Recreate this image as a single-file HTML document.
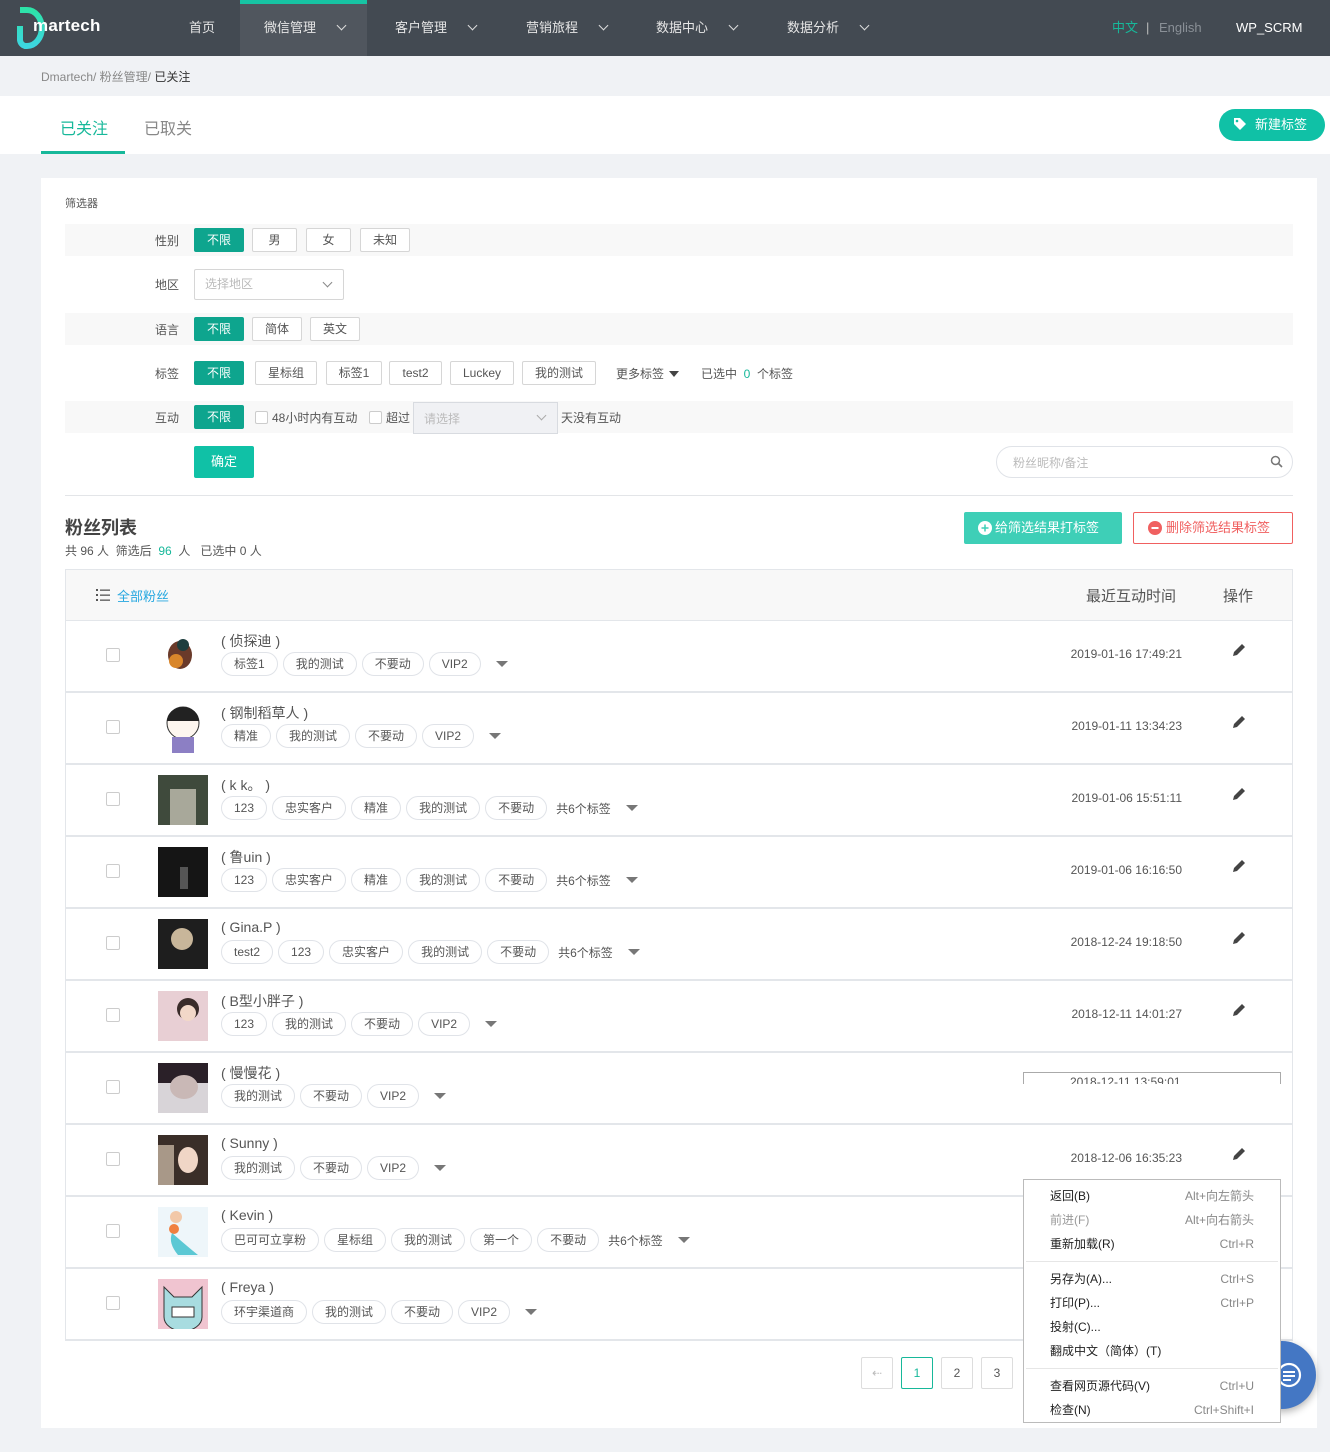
<!DOCTYPE html>
<html><head><meta charset="utf-8">
<style>
*{box-sizing:border-box;margin:0;padding:0}
body{width:1330px;height:1452px;background:#f0f2f5;font-family:"Liberation Sans","Noto Sans CJK SC",sans-serif;font-size:12px;color:#555;position:relative;overflow:hidden}
.abs{position:absolute}
.hdr{left:0;top:0;width:1330px;height:56px;background:#434a52}
.nav{top:0;height:56px;line-height:56px;color:#e6e6e6;font-size:13px}
.nav .v{display:inline-block;width:7px;height:7px;border-right:1.3px solid #ddd;border-bottom:1.3px solid #ddd;transform:rotate(45deg);margin-left:22px;position:relative;top:-3px}
.btn{position:absolute;height:24px;line-height:22px;border:1px solid #d6d6d6;border-radius:2px;background:#fff;text-align:center;font-size:12px;color:#555}
.btn.on{background:#0ea58e;border-color:#0ea58e;color:#fff}
.lbl{position:absolute;left:155px;font-size:12px;color:#555}
.band{position:absolute;left:65px;width:1228px;background:#f8f8f8}
.row{position:absolute;left:66px;width:1226px;height:72px;background:#fff;border-bottom:2px solid #e3e6ea}
.cb{position:absolute;left:40px;top:27px;width:14px;height:14px;border:1px solid #ccc;border-radius:2px;background:#fff}
.av{position:absolute;left:92px;top:10px;width:50px;height:50px}
.nm{position:absolute;left:155px;top:10px;font-size:14px;color:#555}
.tags{position:absolute;left:155px;top:31px;display:flex;gap:5px;align-items:center}
.tg{height:24px;line-height:22px;border:1px solid #e0e3e8;border-radius:12px;padding:0 12px;font-size:12px;color:#555;background:#fff}
.tri{width:0;height:0;border-left:6px solid transparent;border-right:6px solid transparent;border-top:6px solid #777;margin-left:10px}
.dt{position:absolute;right:110px;top:26px;font-size:12px;color:#555}
.pen{position:absolute;right:46px;top:22px}
.pg{position:absolute;top:1357px;width:32px;height:32px;border:1px solid #ddd;border-radius:2px;background:#fff;text-align:center;line-height:30px;font-size:12px;color:#555}
.cm{left:1023px;top:1179px;width:258px;height:244px;background:#fff;border:1px solid #bbb;font-size:12px;color:#222}
.cm div{position:absolute;left:26px;right:26px;height:20px;line-height:20px}
.cm span{float:right;color:#888}
.sep{position:absolute;left:2px!important;right:2px!important;height:1px!important;background:#e6e6e6}
</style></head><body>

<div class="abs hdr"></div>
<svg class="abs" style="left:15px;top:6px" width="30" height="44" viewBox="0 0 30 44"><defs><linearGradient id="g" x1="0" y1="0" x2="0" y2="1"><stop offset="0" stop-color="#2de3a8"/><stop offset="1" stop-color="#3dd6e0"/></linearGradient></defs><path d="M5 4 H12 A14 17 0 0 1 12 40 H10 A7 7 0 0 1 5 34 V20" fill="none" stroke="url(#g)" stroke-width="6"/></svg>
<div class="abs" style="left:33px;top:16px;color:#fff;font-size:17px;font-weight:bold;letter-spacing:0.2px">martech</div>
<div class="abs" style="left:240px;top:0;width:127px;height:56px;background:#50565e"></div>
<div class="abs" style="left:240px;top:0;width:127px;height:4px;background:#17c3a3"></div>
<div class="abs nav" style="left:189px">首页</div>
<div class="abs nav" style="left:264px">微信管理<i class="v"></i></div>
<div class="abs nav" style="left:395px">客户管理<i class="v"></i></div>
<div class="abs nav" style="left:526px">营销旅程<i class="v"></i></div>
<div class="abs nav" style="left:656px">数据中心<i class="v"></i></div>
<div class="abs nav" style="left:787px">数据分析<i class="v"></i></div>
<div class="abs nav" style="left:1112px;color:#17b89a">中文</div>
<div class="abs nav" style="left:1146px;color:#bbb">|</div>
<div class="abs nav" style="left:1159px;color:#8a9097">English</div>
<div class="abs nav" style="left:1236px;color:#fff">WP_SCRM</div>

<div class="abs" style="left:41px;top:68px;color:#888">Dmartech/ 粉丝管理/ <b style="color:#333;font-weight:normal">已关注</b></div>

<div class="abs" style="left:0;top:96px;width:1330px;height:58px;background:#fff"></div>
<div class="abs" style="left:60px;top:115px;font-size:16px;color:#17b89a">已关注</div>
<div class="abs" style="left:41px;top:151px;width:84px;height:3px;background:#17b89a"></div>
<div class="abs" style="left:144px;top:115px;font-size:16px;color:#888">已取关</div>
<div class="abs" style="left:1219px;top:109px;width:106px;height:32px;border-radius:16px;background:#10c1a6;color:#fff;font-size:13px;line-height:32px;padding-left:36px">新建标签</div>
<svg class="abs" style="left:1233px;top:117px" width="14" height="14" viewBox="0 0 14 14"><path d="M1 1h6l6 6-6 6-6-6z" fill="#fff"/><circle cx="4" cy="4" r="1.3" fill="#10c1a6"/></svg>

<div class="abs" style="left:41px;top:178px;width:1276px;height:1250px;background:#fff"></div>
<div class="abs" style="left:65px;top:195px;font-size:11px;color:#555">筛选器</div>

<div class="band" style="top:224px;height:32px"></div>
<div class="lbl" style="top:232px">性别</div>
<div class="btn on" style="left:194px;top:228px;width:50px">不限</div>
<div class="btn" style="left:252px;top:228px;width:45px">男</div>
<div class="btn" style="left:306px;top:228px;width:45px">女</div>
<div class="btn" style="left:360px;top:228px;width:50px">未知</div>

<div class="lbl" style="top:276px">地区</div>
<div class="btn" style="left:194px;top:269px;width:150px;height:31px;line-height:29px;text-align:left;padding-left:10px;color:#bbb">选择地区</div>
<div class="abs" style="left:324px;top:279px;width:7px;height:7px;border-right:1px solid #888;border-bottom:1px solid #888;transform:rotate(45deg)"></div>

<div class="band" style="top:313px;height:32px"></div>
<div class="lbl" style="top:321px">语言</div>
<div class="btn on" style="left:194px;top:317px;width:50px">不限</div>
<div class="btn" style="left:252px;top:317px;width:50px">简体</div>
<div class="btn" style="left:310px;top:317px;width:50px">英文</div>

<div class="lbl" style="top:365px">标签</div>
<div class="btn on" style="left:194px;top:361px;width:50px">不限</div>
<div class="btn" style="left:255px;top:361px;width:62px">星标组</div>
<div class="btn" style="left:326px;top:361px;width:56px">标签1</div>
<div class="btn" style="left:389px;top:361px;width:53px">test2</div>
<div class="btn" style="left:450px;top:361px;width:64px">Luckey</div>
<div class="btn" style="left:522px;top:361px;width:74px">我的测试</div>
<div class="abs" style="left:616px;top:365px">更多标签</div>
<div class="abs" style="left:669px;top:371px;border-left:5px solid transparent;border-right:5px solid transparent;border-top:6px solid #444"></div>
<div class="abs" style="left:701px;top:365px">已选中 <span style="color:#17b89a">&nbsp;0&nbsp;</span> 个标签</div>

<div class="band" style="top:401px;height:32px"></div>
<div class="lbl" style="top:409px">互动</div>
<div class="btn on" style="left:194px;top:405px;width:50px">不限</div>
<div class="abs" style="left:255px;top:411px;width:13px;height:13px;border:1px solid #ccc;border-radius:2px;background:#fff"></div>
<div class="abs" style="left:272px;top:409px">48小时内有互动</div>
<div class="abs" style="left:369px;top:411px;width:13px;height:13px;border:1px solid #ccc;border-radius:2px;background:#fff"></div>
<div class="abs" style="left:386px;top:409px">超过</div>
<div class="abs" style="left:413px;top:402px;width:145px;height:32px;background:#f0f1f4;border:1px solid #d8dbe0;color:#bbb;padding:7px 10px">请选择</div>
<div class="abs" style="left:538px;top:412px;width:7px;height:7px;border-right:1px solid #aaa;border-bottom:1px solid #aaa;transform:rotate(45deg)"></div>
<div class="abs" style="left:561px;top:409px">天没有互动</div>

<div class="abs" style="left:194px;top:446px;width:60px;height:32px;background:#10c1a6;border-radius:2px;color:#fff;text-align:center;line-height:32px;font-size:13px">确定</div>
<div class="abs" style="left:996px;top:446px;width:297px;height:32px;border:1px solid #e0e3e8;border-radius:16px;color:#bbb;padding:7px 16px">粉丝昵称/备注</div>
<svg class="abs" style="left:1270px;top:455px" width="13" height="13" viewBox="0 0 13 13"><circle cx="5.5" cy="5.5" r="4" fill="none" stroke="#777" stroke-width="1.5"/><path d="M8.5 8.5l3.5 3.5" stroke="#777" stroke-width="1.6"/></svg>
<div class="abs" style="left:65px;top:495px;width:1228px;height:1px;background:#e3e5e8"></div>

<div class="abs" style="left:65px;top:514px;font-size:18px;font-weight:bold;color:#444">粉丝列表</div>
<div class="abs" style="left:65px;top:542px">共 96 人 &nbsp;筛选后 <span style="color:#17b89a">&nbsp;96&nbsp;</span> 人 &nbsp; 已选中 0 人</div>
<div class="abs" style="left:964px;top:512px;width:158px;height:32px;background:#3ecfb7;border-radius:2px;color:#fff;font-size:13px;line-height:32px;padding-left:31px">给筛选结果打标签</div>
<svg class="abs" style="left:978px;top:521px" width="14" height="14"><circle cx="7" cy="7" r="7" fill="#fff"/><path d="M7 3.5v7M3.5 7h7" stroke="#3ecfb7" stroke-width="1.5"/></svg>
<div class="abs" style="left:1133px;top:512px;width:160px;height:32px;border:1px solid #f06060;border-radius:2px;color:#f06060;font-size:13px;line-height:30px;padding-left:32px">删除筛选结果标签</div>
<svg class="abs" style="left:1148px;top:521px" width="14" height="14"><circle cx="7" cy="7" r="7" fill="#f06060"/><path d="M3.5 7h7" stroke="#fff" stroke-width="2"/></svg>

<div class="abs" style="left:65px;top:569px;width:1228px;height:772px;border:1px solid #e3e6ea;border-bottom:none"></div>
<div class="abs" style="left:66px;top:570px;width:1226px;height:51px;background:#f8f8f8;border-bottom:1px solid #e3e6ea"></div>
<svg class="abs" style="left:96px;top:589px" width="14" height="12"><g fill="#555"><rect x="0" y="0" width="2" height="2"/><rect x="0" y="5" width="2" height="2"/><rect x="0" y="10" width="2" height="2"/><rect x="4" y="0.5" width="10" height="1.3"/><rect x="4" y="5.5" width="10" height="1.3"/><rect x="4" y="10.5" width="10" height="1.3"/></g></svg>
<div class="abs" style="left:117px;top:586px;font-size:13px;color:#27a8e0">全部粉丝</div>
<div class="abs" style="left:1086px;top:585px;font-size:15px;color:#555">最近互动时间</div>
<div class="abs" style="left:1223px;top:585px;font-size:15px;color:#555">操作</div>

<!-- rows -->
<div class="row" style="top:621px"><div class="cb"></div><div class="av"><svg width="50" height="50"><ellipse cx="22" cy="24" rx="12" ry="14" fill="#6a3a2a"/><circle cx="18" cy="30" r="7" fill="#d9862b"/><circle cx="25" cy="14" r="6" fill="#1e3e3e"/></svg></div><div class="nm">( 侦探迪 )</div><div class="tags"><span class="tg">标签1</span><span class="tg">我的测试</span><span class="tg">不要动</span><span class="tg">VIP2</span><span class="tri"></span></div><div class="dt">2019-01-16 17:49:21</div><svg class="pen" width="14" height="14" viewBox="0 0 14 14"><path d="M1 13l1-4 8-8 3 3-8 8z" fill="#444"/></svg></div>
<div class="row" style="top:693px"><div class="cb"></div><div class="av"><svg width="50" height="50"><circle cx="25" cy="20" r="16" fill="#fdf6ef" stroke="#333" stroke-width="1"/><path d="M9 18a16 14 0 0 1 32 0z" fill="#222"/><rect x="14" y="34" width="22" height="16" fill="#8c7fc4"/></svg></div><div class="nm">( 钢制稻草人 )</div><div class="tags"><span class="tg">精准</span><span class="tg">我的测试</span><span class="tg">不要动</span><span class="tg">VIP2</span><span class="tri"></span></div><div class="dt">2019-01-11 13:34:23</div><svg class="pen" width="14" height="14" viewBox="0 0 14 14"><path d="M1 13l1-4 8-8 3 3-8 8z" fill="#444"/></svg></div>
<div class="row" style="top:765px"><div class="cb"></div><div class="av" style="background:#3f4a3c"><svg width="50" height="50"><rect x="12" y="14" width="26" height="36" fill="#a8a89a"/></svg></div><div class="nm">( k k。 )</div><div class="tags"><span class="tg">123</span><span class="tg">忠实客户</span><span class="tg">精准</span><span class="tg">我的测试</span><span class="tg">不要动</span><span style="margin-left:4px">共6个标签</span><span class="tri"></span></div><div class="dt">2019-01-06 15:51:11</div><svg class="pen" width="14" height="14" viewBox="0 0 14 14"><path d="M1 13l1-4 8-8 3 3-8 8z" fill="#444"/></svg></div>
<div class="row" style="top:837px"><div class="cb"></div><div class="av" style="background:#151515"><svg width="50" height="50"><rect x="22" y="20" width="8" height="22" fill="#555"/></svg></div><div class="nm">( 鲁uin )</div><div class="tags"><span class="tg">123</span><span class="tg">忠实客户</span><span class="tg">精准</span><span class="tg">我的测试</span><span class="tg">不要动</span><span style="margin-left:4px">共6个标签</span><span class="tri"></span></div><div class="dt">2019-01-06 16:16:50</div><svg class="pen" width="14" height="14" viewBox="0 0 14 14"><path d="M1 13l1-4 8-8 3 3-8 8z" fill="#444"/></svg></div>
<div class="row" style="top:909px"><div class="cb"></div><div class="av" style="background:#1e1e1e"><svg width="50" height="50"><circle cx="24" cy="20" r="11" fill="#c8b69a"/></svg></div><div class="nm">( Gina.P )</div><div class="tags"><span class="tg">test2</span><span class="tg">123</span><span class="tg">忠实客户</span><span class="tg">我的测试</span><span class="tg">不要动</span><span style="margin-left:4px">共6个标签</span><span class="tri"></span></div><div class="dt">2018-12-24 19:18:50</div><svg class="pen" width="14" height="14" viewBox="0 0 14 14"><path d="M1 13l1-4 8-8 3 3-8 8z" fill="#444"/></svg></div>
<div class="row" style="top:981px"><div class="cb"></div><div class="av" style="background:#e8cfd4"><svg width="50" height="50"><circle cx="30" cy="18" r="11" fill="#3a2c2a"/><circle cx="30" cy="22" r="8" fill="#f2d8c8"/></svg></div><div class="nm">( B型小胖子 )</div><div class="tags"><span class="tg">123</span><span class="tg">我的测试</span><span class="tg">不要动</span><span class="tg">VIP2</span><span class="tri"></span></div><div class="dt">2018-12-11 14:01:27</div><svg class="pen" width="14" height="14" viewBox="0 0 14 14"><path d="M1 13l1-4 8-8 3 3-8 8z" fill="#444"/></svg></div>
<div class="row" style="top:1053px"><div class="cb"></div><div class="av" style="background:#d8d4d8"><svg width="50" height="50"><rect width="50" height="20" fill="#2a2028"/><ellipse cx="26" cy="24" rx="14" ry="12" fill="#c9b8b6"/></svg></div><div class="nm">( 慢慢花 )</div><div class="tags"><span class="tg">我的测试</span><span class="tg">不要动</span><span class="tg">VIP2</span><span class="tri"></span></div></div>
<div class="row" style="top:1125px"><div class="cb"></div><div class="av" style="background:#3a2e28"><svg width="50" height="50"><ellipse cx="30" cy="25" rx="10" ry="13" fill="#f0d6c6"/><rect x="0" y="10" width="16" height="40" fill="#a89888"/></svg></div><div class="nm">( Sunny )</div><div class="tags"><span class="tg">我的测试</span><span class="tg">不要动</span><span class="tg">VIP2</span><span class="tri"></span></div><div class="dt">2018-12-06 16:35:23</div><svg class="pen" width="14" height="14" viewBox="0 0 14 14"><path d="M1 13l1-4 8-8 3 3-8 8z" fill="#444"/></svg></div>
<div class="row" style="top:1197px"><div class="cb"></div><div class="av" style="background:#eef6fa"><svg width="50" height="50"><circle cx="18" cy="10" r="6" fill="#f2c8a8"/><circle cx="16" cy="22" r="5" fill="#f08040"/><path d="M14 26 Q30 40 40 48 L20 48 Q10 36 14 26z" fill="#5cc8d4"/></svg></div><div class="nm">( Kevin )</div><div class="tags"><span class="tg">巴可可立享粉</span><span class="tg">星标组</span><span class="tg">我的测试</span><span class="tg">第一个</span><span class="tg">不要动</span><span style="margin-left:4px">共6个标签</span><span class="tri"></span></div></div>
<div class="row" style="top:1269px"><div class="cb"></div><div class="av" style="background:#f0c4d0"><svg width="50" height="50"><path d="M6 8l10 10h18l10-10v30a19 14 0 0 1-38 0z" fill="#a8dce0" stroke="#333"/><rect x="14" y="28" width="22" height="10" fill="#fff" stroke="#333"/></svg></div><div class="nm">( Freya )</div><div class="tags"><span class="tg">环宇渠道商</span><span class="tg">我的测试</span><span class="tg">不要动</span><span class="tg">VIP2</span><span class="tri"></span></div></div>

<!-- ghost strip -->
<div class="abs" style="left:1023px;top:1072px;width:258px;height:12px;border:1px solid #aaa;border-bottom:none;background:#fff;overflow:hidden"><div style="position:absolute;left:46px;top:2px;font-size:12px;color:#555">2018-12-11 13:59:01</div></div>

<!-- pagination -->
<div class="pg" style="left:861px;color:#bbb">&#8672;</div>
<div class="pg" style="left:901px;border-color:#17b89a;color:#17b89a">1</div>
<div class="pg" style="left:941px">2</div>
<div class="pg" style="left:981px">3</div>

<!-- chat button -->
<div class="abs" style="left:1248px;top:1341px;width:68px;height:68px;border-radius:50%;background:#4477c4;box-shadow:0 3px 8px rgba(0,0,0,.3)"></div>
<svg class="abs" style="left:1275px;top:1361px" width="28" height="28"><circle cx="14" cy="14" r="11" fill="none" stroke="#fff" stroke-width="2.2"/><path d="M8 11h12M8 15h12M8 19h8" stroke="#fff" stroke-width="2"/></svg>

<!-- context menu -->
<div class="abs cm">
<div style="top:6px">返回(B)<span>Alt+向左箭头</span></div>
<div style="top:30px;color:#999">前进(F)<span>Alt+向右箭头</span></div>
<div style="top:54px">重新加载(R)<span>Ctrl+R</span></div>
<div class="sep" style="top:81px"></div>
<div style="top:89px">另存为(A)...<span>Ctrl+S</span></div>
<div style="top:113px">打印(P)...<span>Ctrl+P</span></div>
<div style="top:137px">投射(C)...</div>
<div style="top:161px">翻成中文（简体）(T)</div>
<div class="sep" style="top:188px"></div>
<div style="top:196px">查看网页源代码(V)<span>Ctrl+U</span></div>
<div style="top:220px">检查(N)<span>Ctrl+Shift+I</span></div>
</div>
</body></html>
